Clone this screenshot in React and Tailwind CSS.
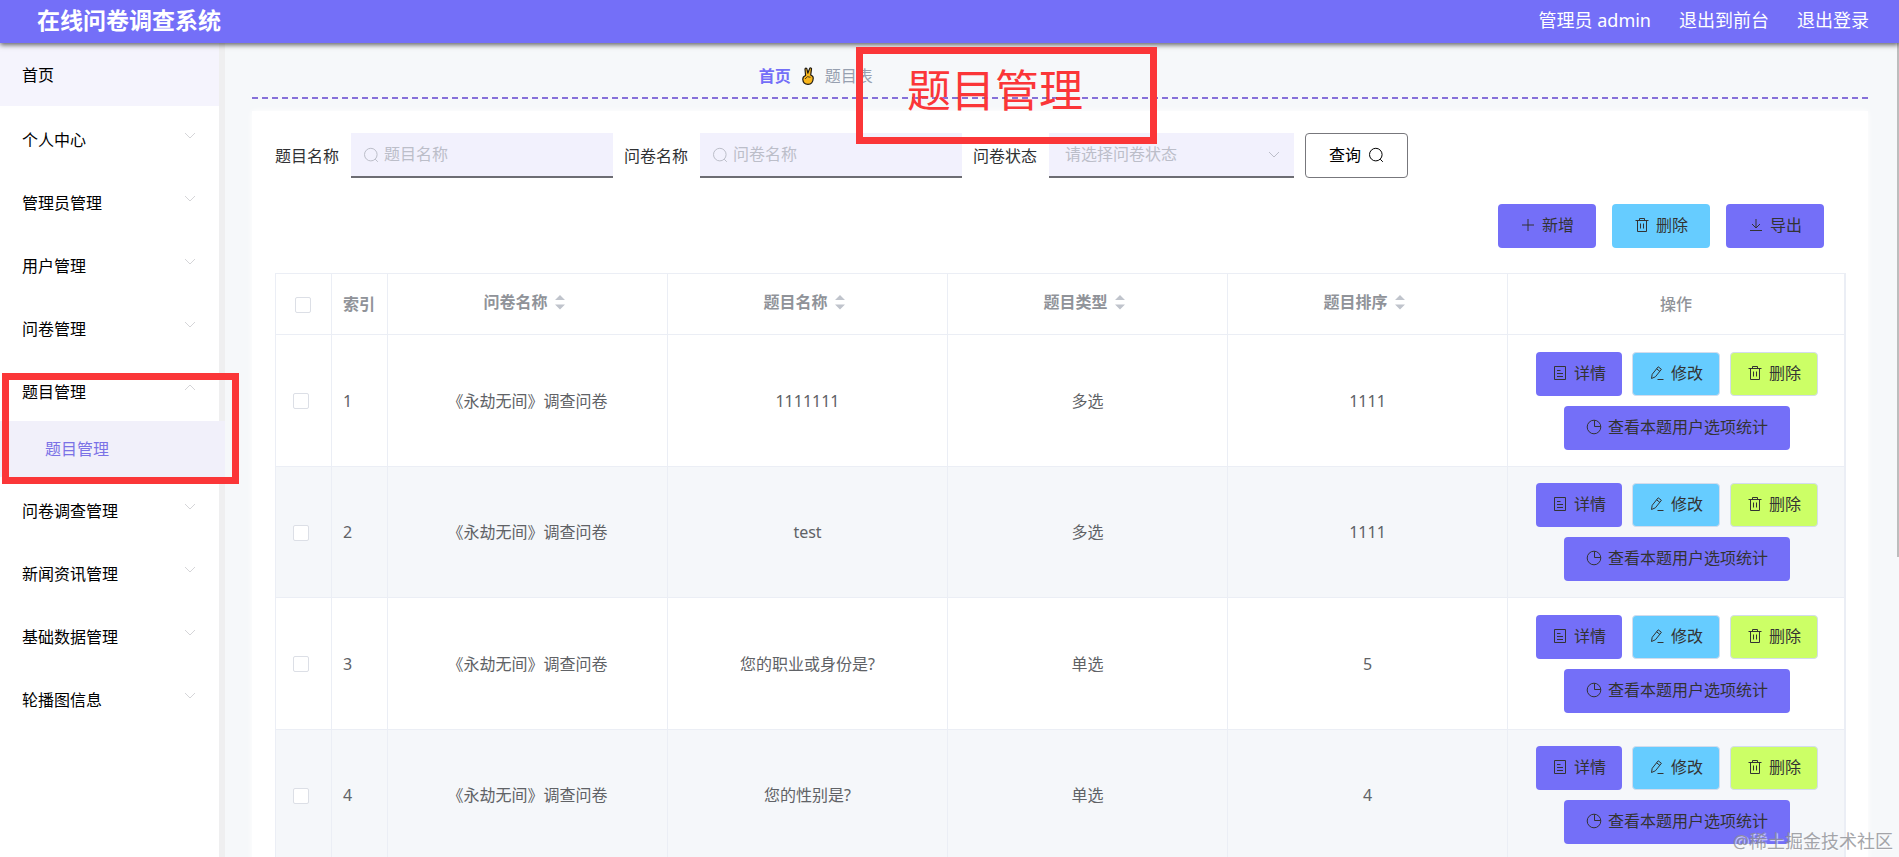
import { useState } from "react";

const MENU = [
  { label: "个人中心" },
  { label: "管理员管理" },
  { label: "用户管理" },
  { label: "问卷管理" },
  { label: "题目管理", children: ["题目管理"] },
  { label: "问卷调查管理" },
  { label: "新闻资讯管理" },
  { label: "基础数据管理" },
  { label: "轮播图信息" },
];

const COLUMNS = ["问卷名称", "题目名称", "题目类型", "题目排序"];

const ROWS = [
  { id: 1, survey: "《永劫无间》调查问卷", title: "1111111", type: "多选", order: "1111" },
  { id: 2, survey: "《永劫无间》调查问卷", title: "test", type: "多选", order: "1111" },
  { id: 3, survey: "《永劫无间》调查问卷", title: "您的职业或身份是?", type: "单选", order: "5" },
  { id: 4, survey: "《永劫无间》调查问卷", title: "您的性别是?", type: "单选", order: "4" },
];

export default function App() {
  const [open, setOpen] = useState("题目管理");
  const [filters, setFilters] = useState({ title: "", survey: "", status: "" });
  const [selected, setSelected] = useState([]);

  const handleFilter = (field) => (e) => {
    setFilters({ ...filters, [field]: e.target.value });
  };

  const toggleRow = (id) => {
    setSelected(
      selected.includes(id) ? selected.filter((x) => x !== id) : [...selected, id]
    );
  };

  const toggleAll = (e) => {
    setSelected(e.target.checked ? ROWS.map((r) => r.id) : []);
  };

  return (
    <div className="relative flex h-screen flex-col overflow-hidden bg-[#f6f8fa] font-['Noto_Sans','Noto_Sans_CJK_SC',sans-serif] text-base leading-6 text-[#303133]">

      {/* HEADER */}
      <header className="z-10 flex h-[43px] shrink-0 items-center justify-between bg-[#746ff8] pb-1 pl-[37px] pr-[30px] text-white shadow-[0_2px_5px_rgba(0,0,0,0.6)]">
        <h1 className="text-[23px] font-bold leading-8">在线问卷调查系统</h1>
        <nav className="flex items-center gap-7 text-lg leading-6">
          <span>管理员 admin</span>
          <a href="#front">退出到前台</a>
          <a href="#logout">退出登录</a>
        </nav>
      </header>

      <div className="flex min-h-0 flex-1">

        {/* SIDEBAR */}
        <aside className="w-[225px] shrink-0 border-r-6 border-[#efeff0] bg-white text-black">
          <a href="#home" className="flex h-[63px] items-center bg-[#f5f4fd] pl-[22px]">
            首页
          </a>
          {MENU.map((item) => (
            <div key={item.label}>
              <button
                type="button"
                onClick={() => setOpen(open === item.label ? "" : item.label)}
                className="flex h-[63px] w-full items-center justify-between pl-[22px] pr-[23px] text-left"
              >
                <span className="pt-1">{item.label}</span>
                <Chevron up={open === item.label && !!item.children} className="mb-1 h-[7px] w-3 text-[#d5d5d8]" />
              </button>
              {open === item.label &&
                item.children?.map((child) => (
                  <a
                    key={child}
                    href="#questions"
                    className="-mr-[6px] flex h-14 items-center bg-[#f1f0fa] pl-[45px] text-[#7b72e6]"
                  >
                    {child}
                  </a>
                ))}
            </div>
          ))}
        </aside>

        {/* CONTENT */}
        <main className="min-w-0 flex-1 overflow-hidden pl-[27px] pr-[31px]">
          <div className="flex h-14 items-center border-b-2 border-dashed border-[#8670d9] pt-3">
            <nav className="ml-[30%] flex items-center gap-[11px] pl-[22px]">
              <a href="#home" className="font-bold text-[#746ff8]">首页</a>
              <VictoryHand />
              <span className="text-[#97a0b0]">题目表</span>
            </nav>
          </div>

          <section className="mt-3 bg-white pb-6 pl-[23px] pr-[22px] pt-[22px] shadow-[0_0_6px_white]">
            {/* FILTERS */}
            <form onSubmit={(e) => e.preventDefault()} className="flex items-center gap-[11px]">
              <SearchField id="title" label="题目名称" value={filters.title} onChange={handleFilter("title")} />
              <SearchField id="survey" label="问卷名称" value={filters.survey} onChange={handleFilter("survey")} />
              <div className="flex items-center gap-3">
                <label htmlFor="status">问卷状态</label>
                <div className="relative">
                  <select
                    id="status"
                    value={filters.status}
                    onChange={handleFilter("status")}
                    className="block h-[45px] w-[245px] appearance-none border-b-2 border-[#6d6d73] bg-[#f2f1fd] pb-0.5 pl-4 text-[#bcbec9] outline-none"
                  >
                    <option value="">请选择问卷状态</option>
                    <option value="on">启用</option>
                    <option value="off">禁用</option>
                  </select>
                  <Chevron className="pointer-events-none absolute right-[14px] top-[18px] h-[7px] w-3 text-[#bcbec9]" />
                </div>
              </div>
              <button
                type="submit"
                className="flex h-[45px] items-center gap-[7px] rounded border border-[#77777c] bg-white px-[23px] pb-0.5 text-black"
              >
                查询
                <SearchIcon />
              </button>
            </form>

            {/* ACTIONS */}
            <div className="mt-[26px] flex justify-end gap-4 pr-[22px]">
              <ActionButton icon={<PlusIcon />} label="新增" className="bg-[#746ff8] px-[22px]" />
              <ActionButton icon={<TrashIcon />} label="删除" className="bg-[#66ccff] px-[22px]" />
              <ActionButton icon={<DownloadIcon />} label="导出" className="bg-[#746ff8] px-[22px]" />
            </div>

            {/* TABLE */}
            <table className="mt-[25px] w-full table-fixed border-separate border-spacing-0 border-l border-r border-t border-[#ebeef5] text-center text-[#606266]">
              <colgroup>
                <col className="w-14" />
                <col className="w-14" />
                <col />
                <col />
                <col />
                <col />
                <col className="w-[337px]" />
              </colgroup>
              <thead className="text-[#909399]">
                <tr className="h-[61px]">
                  <th className="border-b border-r border-[#ebeef5] pb-0.5 pr-0.5">
                    <Checkbox label="全选" checked={selected.length === ROWS.length} onChange={toggleAll} />
                  </th>
                  <th className="border-b border-r border-[#ebeef5] pl-[11px] text-left">索引</th>
                  {COLUMNS.map((name) => (
                    <th key={name} className="border-b border-r border-[#ebeef5] pb-1">
                      <span className="flex items-center justify-center">
                        {name}
                        <SortCarets />
                      </span>
                    </th>
                  ))}
                  <th className="border-b border-r border-[#ebeef5] font-medium">操作</th>
                </tr>
              </thead>
              <tbody>
                {ROWS.map((row) => (
                  <tr key={row.id} className="h-[132px] even:h-[131px] even:bg-[#f5f7fa]">
                    <td className="border-b border-r border-[#ebeef5] pb-0.5 pr-1.5">
                      <Checkbox
                        label={`选择 ${row.id}`}
                        checked={selected.includes(row.id)}
                        onChange={() => toggleRow(row.id)}
                      />
                    </td>
                    <td className="border-b border-r border-[#ebeef5] pl-[11px] text-left">{row.id}</td>
                    <td className="border-b border-r border-[#ebeef5]">{row.survey}</td>
                    <td className="border-b border-r border-[#ebeef5]">{row.title}</td>
                    <td className="border-b border-r border-[#ebeef5]">{row.type}</td>
                    <td className="border-b border-r border-[#ebeef5]">{row.order}</td>
                    <td className="border-b border-r border-[#ebeef5]">
                      <div className="flex flex-wrap justify-center gap-[10px] pl-5 pr-[18px]">
                        <ActionButton icon={<DetailIcon />} label="详情" className="bg-[#746ff8] px-4" />
                        <ActionButton icon={<EditIcon />} label="修改" className="border border-[#d3dcec] bg-[#66ccff] px-4" />
                        <ActionButton icon={<TrashIcon />} label="删除" className="border border-[#d3dcec] bg-[#ccff66] px-4" />
                        <ActionButton icon={<PieIcon />} label="查看本题用户选项统计" className="bg-[#746ff8] px-[22px]" />
                      </div>
                    </td>
                  </tr>
                ))}
              </tbody>
            </table>
          </section>
        </main>
      </div>

      {/* SCROLL THUMB */}
      <div className="absolute right-0 top-[43px] h-[60%] w-[2px] bg-[#bdbdbd]" />

      {/* ANNOTATIONS */}
      <div className="pointer-events-none absolute left-[2px] top-[373px] z-20 h-[111px] w-[237px] border-7 border-[#fb3638]" />
      <div className="pointer-events-none absolute left-[856px] top-[47px] z-20 h-[97px] w-[301px] border-7 border-[#fb3638] pl-11 pt-2 text-[44px] leading-[56px] text-[#fb3638]">
        题目管理
      </div>
      <div className="pointer-events-none absolute bottom-1 right-[6px] z-20 text-lg leading-6 text-[#8f9095] opacity-80 [text-shadow:1px_1px_1px_white]">
        @稀土掘金技术社区
      </div>
    </div>
  );
}

/* ---------------- FORM PARTS ---------------- */
function SearchField({ id, label, value, onChange }) {
  return (
    <div className="flex items-center gap-3">
      <label htmlFor={id}>{label}</label>
      <div className="relative">
        <SearchIcon className="absolute left-3 top-[14px] text-[#bcbec9]" />
        <input
          id={id}
          type="text"
          placeholder={label}
          value={value}
          onChange={onChange}
          className="block h-[45px] w-[262px] border-b-2 border-[#6d6d73] bg-[#f2f1fd] pb-0.5 pl-[33px] outline-none placeholder:text-[#bcbec9]"
        />
      </div>
    </div>
  );
}

function Checkbox({ label, checked, onChange }) {
  return (
    <input
      type="checkbox"
      aria-label={label}
      checked={checked}
      onChange={onChange}
      className="inline-block size-4 appearance-none rounded-xs border border-[#dcdfe6] bg-white align-middle checked:bg-[#746ff8]"
    />
  );
}

function ActionButton({ icon, label, className }) {
  return (
    <button
      type="button"
      className={`flex h-11 items-center justify-center gap-[6px] rounded pb-0.5 text-[#333333] ${className}`}
    >
      {icon}
      {label}
    </button>
  );
}

/* ---------------- ICONS ---------------- */
function Icon({ children, className = "" }) {
  return (
    <svg viewBox="0 0 16 16" className={`size-4 shrink-0 ${className}`} fill="none" stroke="currentColor" strokeWidth="1">
      {children}
    </svg>
  );
}

function SearchIcon({ className }) {
  return (
    <Icon className={className}>
      <circle cx="7.8" cy="7.6" r="6.3" />
      <path d="M12.2 12.2l2.6 2.6" />
    </Icon>
  );
}

function PlusIcon() {
  return (
    <Icon>
      <path d="M8 2v12M2 8h12" />
    </Icon>
  );
}

function TrashIcon() {
  return (
    <Icon>
      <path d="M1.5 3.5h13M5.5 3.5v-2h5v2M3.5 3.5v11h9v-11M6.5 6.5v5M9.5 6.5v5" />
    </Icon>
  );
}

function DownloadIcon() {
  return (
    <Icon>
      <path d="M8 2v8.5M4 7l4 4 4-4M2 13.5h12" />
    </Icon>
  );
}

function DetailIcon() {
  return (
    <Icon>
      <path d="M2.5 1.5h11v13h-11zM5 5.5h3.5M5 8.5h6M5 11.5h6" />
    </Icon>
  );
}

function EditIcon() {
  return (
    <Icon>
      <path d="M2.5 13.5l.7-4.2L9.2 1.8l3.2 2.5-6 7.5-3.9 1.7zM7.6 3.8l3.2 2.5M8.5 14.5h6" />
    </Icon>
  );
}

function PieIcon() {
  return (
    <Icon>
      <circle cx="8" cy="8" r="6.8" />
      <path d="M8.5 1.2v6.3h6.2" />
    </Icon>
  );
}

function Chevron({ up, className }) {
  return (
    <svg viewBox="0 0 12 7" className={className} fill="none" stroke="currentColor" strokeWidth="1">
      <path d={up ? "M1 6l5-5 5 5" : "M1 1l5 5 5-5"} />
    </svg>
  );
}

function SortCarets() {
  return (
    <svg viewBox="0 0 24 16" className="h-4 w-6" fill="#c0c4cc">
      <path d="M7 6l5-5 5 5zM7 10.5l5 5 5-5z" />
    </svg>
  );
}

function VictoryHand() {
  return (
    <svg viewBox="0 0 12 18" className="h-[18px] w-3" fill="#f9b61c" stroke="#1f1a12" strokeWidth="1.2" strokeLinejoin="round">
      <path d="M3.6 8.5L3 2.2c0-1.4 1.8-1.5 2 0l.8 4L7.6 1.6c.5-1.2 2.2-.7 1.900.6L8.7 8l1.600 1c.8.6 1 1.400.9 2.500-.2 3.400-1.900 5.800-5.200 5.800-3.100 0-5-2-5.200-4.800-.1-1.600.6-3.300 2.800-4z" />
      <path d="M3 12l2.500-2.300 3 .6" fill="none" strokeWidth="0.8" />
    </svg>
  );
}
